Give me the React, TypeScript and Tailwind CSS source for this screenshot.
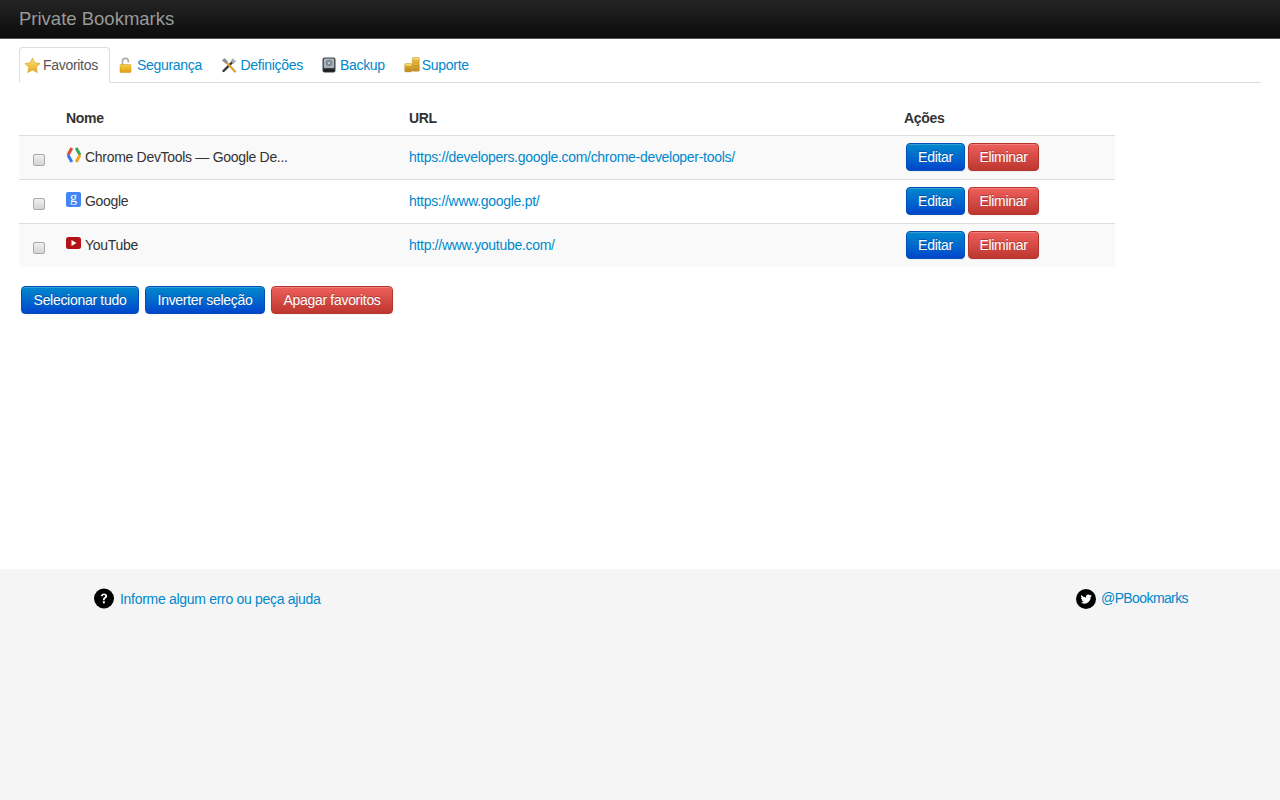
import React from "react";

const Btn = ({ c, children, className = "" }: { c: "blue" | "red"; children: React.ReactNode; className?: string }) => (
  <button
    className={
      "h-[28px] rounded-[4px] border text-[14px] tracking-[-0.3px] leading-[20px] text-white [text-shadow:0_-1px_0_rgba(0,0,0,0.25)] shadow-[inset_0_1px_0_rgba(255,255,255,0.2),0_1px_2px_rgba(0,0,0,0.05)] " +
      (c === "blue"
        ? "bg-gradient-to-b from-[#0088cc] to-[#0044cc] border-[#0050b8] "
        : "bg-gradient-to-b from-[#ee5f5b] to-[#bd362f] border-[#b5352e] ") +
      className
    }
  >
    {children}
  </button>
);

const Star = () => (
  <svg width="17" height="17" viewBox="0 0 17 17">
    <defs>
      <linearGradient id="st" x1="0" y1="0" x2="0" y2="1">
        <stop offset="0" stopColor="#fbe77a" />
        <stop offset="1" stopColor="#e9a91c" />
      </linearGradient>
    </defs>
    <path d="M8.500 1l2.300 4.900 5.200.7-3.800 3.600 1 5.300-4.700-2.600-4.700 2.600 1-5.300L1 6.600l5.200-.7z" fill="url(#st)" stroke="#d9a431" strokeWidth="0.8" strokeLinejoin="round" />
  </svg>
);
const Lock = () => (
  <svg width="13" height="16" viewBox="0 0 13 16">
    <defs>
      <linearGradient id="lk" x1="0" y1="0" x2="0" y2="1">
        <stop offset="0" stopColor="#f6cf4a" />
        <stop offset="1" stopColor="#e39d14" />
      </linearGradient>
    </defs>
    <path d="M3.500 8V4.200a2.900 2.900 0 0 1 5.800 0V5.500" fill="none" stroke="#b0aea4" strokeWidth="1.700" />
    <rect x="1" y="7.500" width="11" height="8" rx="1" fill="url(#lk)" stroke="#cf9416" strokeWidth="0.5" />
  </svg>
);
const Tools = () => (
  <svg width="16" height="16" viewBox="0 0 16 16">
    <path d="M2.500 14L11 5.500" stroke="#333" strokeWidth="2.400" strokeLinecap="round" />
    <path d="M9.500 4l2.800-3 .8 2.300 2.300.5-2.900 3z" fill="#a5abb0" />
    <path d="M14 14.500L6 6" stroke="#dda23a" strokeWidth="2.400" strokeLinecap="round" />
    <path d="M1 3.500l2.300-2.500 3.700 3.300-2.200 2.400z" fill="#8d9298" />
  </svg>
);
const Disk = () => (
  <svg width="14" height="16" viewBox="0 0 14 16">
    <rect x="0.500" y="0.500" width="13" height="15" rx="2" fill="#3c3f42" />
    <rect x="1.800" y="1.500" width="10.400" height="9.500" rx="1" fill="#a9b4ba" />
    <circle cx="7" cy="6" r="3.200" fill="#7e8b92" />
    <circle cx="7" cy="6" r="1" fill="#d5dde0" />
    <rect x="2" y="12.500" width="10" height="2" fill="#15171a" />
  </svg>
);
const Coins = () => (
  <svg width="16" height="16" viewBox="0 0 16 16">
    <g stroke="#a97a15" strokeWidth="0.4">
      <rect x="8" y="0.500" width="7.500" height="3" rx="1.400" fill="#f7d968" />
      <rect x="8" y="3.200" width="7.500" height="3" rx="1.400" fill="#ecbc3f" />
      <rect x="8" y="5.900" width="7.500" height="3" rx="1.400" fill="#e5b338" />
      <rect x="8" y="8.600" width="7.500" height="3" rx="1.400" fill="#d7a42c" />
      <rect x="8" y="11.300" width="7.500" height="3" rx="1.400" fill="#c9952a" />
      <rect x="0.500" y="6.500" width="7.500" height="3" rx="1.400" fill="#f7d968" />
      <rect x="0.500" y="9.200" width="7.500" height="3" rx="1.400" fill="#d7a42c" />
      <rect x="0.500" y="11.900" width="7.500" height="3" rx="1.400" fill="#c9952a" />
    </g>
  </svg>
);

const Devtools = () => (
  <svg width="16" height="16" viewBox="0 0 16 16" fill="none" strokeWidth="3" strokeLinejoin="miter">
    <path d="M5.800 1L2 8" stroke="#dd4b39" />
    <path d="M2 8l3.800 7" stroke="#3b78e7" />
    <path d="M10.200 1L14 8" stroke="#34a853" />
    <path d="M14 8l-3.800 7" stroke="#f4a21e" />
  </svg>
);
const GIcon = () => (
  <div className="w-[15px] h-[15px] rounded-[2px] bg-[#4285f4] flex items-center justify-center">
    <span className="text-[14px] leading-[14px] tracking-normal text-white font-['Liberation_Serif',serif] relative top-[-1px]">g</span>
  </div>
);
const YT = () => (
  <svg width="15" height="12" viewBox="0 0 15 12">
    <rect width="15" height="12" rx="2.500" fill="#b31217" />
    <path d="M5.500 3l5 3-5 3z" fill="#fff" />
  </svg>
);

const tabs: [React.ReactNode, string, string][] = [
  [<Lock />, "Segurança", "w-[18px]"],
  [<Tools />, "Definições", "w-[19.5px]"],
  [<Disk />, "Backup", "w-[18px]"],
  [<Coins />, "Suporte", "w-[18px]"],
];

const rows: [React.ReactNode, string, string, boolean][] = [
  [<Devtools />, "Chrome DevTools — Google De...", "https://developers.google.com/chrome-developer-tools/", true],
  [<GIcon />, "Google", "https://www.google.pt/", false],
  [<YT />, "YouTube", "http://www.youtube.com/", true],
];

export default function App() {
  return (
    <div className="min-h-[800px] flex flex-col bg-white text-[14px] tracking-[-0.3px] leading-[20px] text-[#333333] font-['Liberation_Sans',Arial,sans-serif]">
      <header className="h-[39px] shrink-0 bg-gradient-to-b from-[#252525] to-[#0b0b0b] border-b border-[#555] px-[19px] flex items-center">
        <span className="text-[18.5px] tracking-normal text-[#999999]">Private Bookmarks</span>
      </header>

      <main className="h-[530px] shrink-0 pl-[19px] pr-[19px] pt-[8px]">
        <nav className="flex h-[36px] border-b border-[#dddddd] items-stretch">
          <div className="h-[36px] w-[91px] shrink-0 border border-[#dddddd] border-b-white rounded-t-[4px] bg-white flex items-center pl-[4px] gap-[2px] text-[#555555]">
            <Star />
            <span className="pb-[1px]">Favoritos</span>
          </div>
          <div className="flex items-center ml-[9px] gap-[19px]">
            {tabs.map(([icon, label, w]) => (
              <div key={label} className="flex items-center">
                <span className={"flex items-center " + w}>{icon}</span>
                <span className="text-[#0088cc]">{label}</span>
              </div>
            ))}
          </div>
        </nav>

        <table className="mt-[17px] w-[1096px] table-fixed border-collapse">
          <colgroup>
            <col className="w-[39px]" />
            <col className="w-[343px]" />
            <col className="w-[495px]" />
            <col />
          </colgroup>
          <thead>
            <tr className="h-[35px] text-left font-bold">
              <th />
              <th className="pl-[8px] pt-[1px]">Nome</th>
              <th className="pl-[8px] pt-[1px]">URL</th>
              <th className="pl-[8px] pt-[1px]">Ações</th>
            </tr>
          </thead>
          <tbody>
            {rows.map(([icon, name, url, odd]) => (
              <tr key={name} className={"h-[44px] border-t border-[#dddddd] " + (odd ? "bg-[#f9f9f9]" : "")}>
                <td className="pl-[14px] align-middle">
                  <span className="mt-[6px] block w-[12px] h-[12px] rounded-[2px] border border-[#a9a9a9] bg-gradient-to-b from-[#f0f0f0] to-[#d4d4d4]" />
                </td>
                <td className="pl-[8px] align-middle">
                  <div className="flex items-center gap-[3px]">
                    <span className="w-[16px] flex justify-start relative top-[-2px]">{icon}</span>
                    <span>{name}</span>
                  </div>
                </td>
                <td className="pl-[8px] align-middle text-[#0088cc]">{url}</td>
                <td className="pl-[10px] align-middle">
                  <div className="flex gap-[3px]">
                    <Btn c="blue" className="w-[59px]">Editar</Btn>
                    <Btn c="red" className="w-[71px]">Eliminar</Btn>
                  </div>
                </td>
              </tr>
            ))}
          </tbody>
        </table>

        <div className="mt-[19px] ml-[2px] flex gap-[6px]">
          <Btn c="blue" className="w-[118px]">Selecionar tudo</Btn>
          <Btn c="blue" className="w-[120px]">Inverter seleção</Btn>
          <Btn c="red" className="w-[122px]">Apagar favoritos</Btn>
        </div>
      </main>

      <footer className="flex-1 bg-[#f5f5f5] pl-[94px] pr-[92px] pt-[19px] flex justify-between items-start">
        <div className="flex items-center gap-[6px]">
          <svg width="20" height="21" viewBox="0 0 21 21">
            <circle cx="10.500" cy="10.500" r="10.500" fill="#000" />
            <path d="M7.300 8.200c0-1.900 1.400-3 3.200-3s3.300 1 3.300 2.800c0 2.400-2.600 2.300-2.600 4.400H9.300c0-3 2.400-2.900 2.400-4.400 0-.7-.5-1.100-1.200-1.100s-1.200.5-1.200 1.300z" fill="#fff" />
            <rect x="9.300" y="13.400" width="2.100" height="2.200" fill="#fff" />
          </svg>
          <span className="text-[#0088cc]">Informe algum erro ou peça ajuda</span>
        </div>
        <div className="flex items-center gap-[5px]">
          <svg width="20" height="20" viewBox="0 0 20 20" className="mt-[1px]">
            <circle cx="10" cy="10" r="10" fill="#000" />
            <path d="M15.600 6.600c-.4.2-.8.3-1.300.4.5-.3.8-.7 1-1.200-.4.3-.9.4-1.400.5a2.300 2.300 0 0 0-3.900 2.100 6.400 6.400 0 0 1-4.700-2.400 2.300 2.300 0 0 0 .7 3c-.4 0-.7-.1-1-.3 0 1.100.8 2 1.800 2.300-.3.1-.7.1-1 0 .3.900 1.100 1.600 2.100 1.600a4.600 4.600 0 0 1-3.400 1c4.600 2.900 10.300-.1 10.100-5.500.4-.3.7-.6 1-1z" fill="#fff" />
          </svg>
          <span className="text-[#0088cc] tracking-[-0.6px] relative top-[-1px]">@PBookmarks</span>
        </div>
      </footer>
    </div>
  );
}
